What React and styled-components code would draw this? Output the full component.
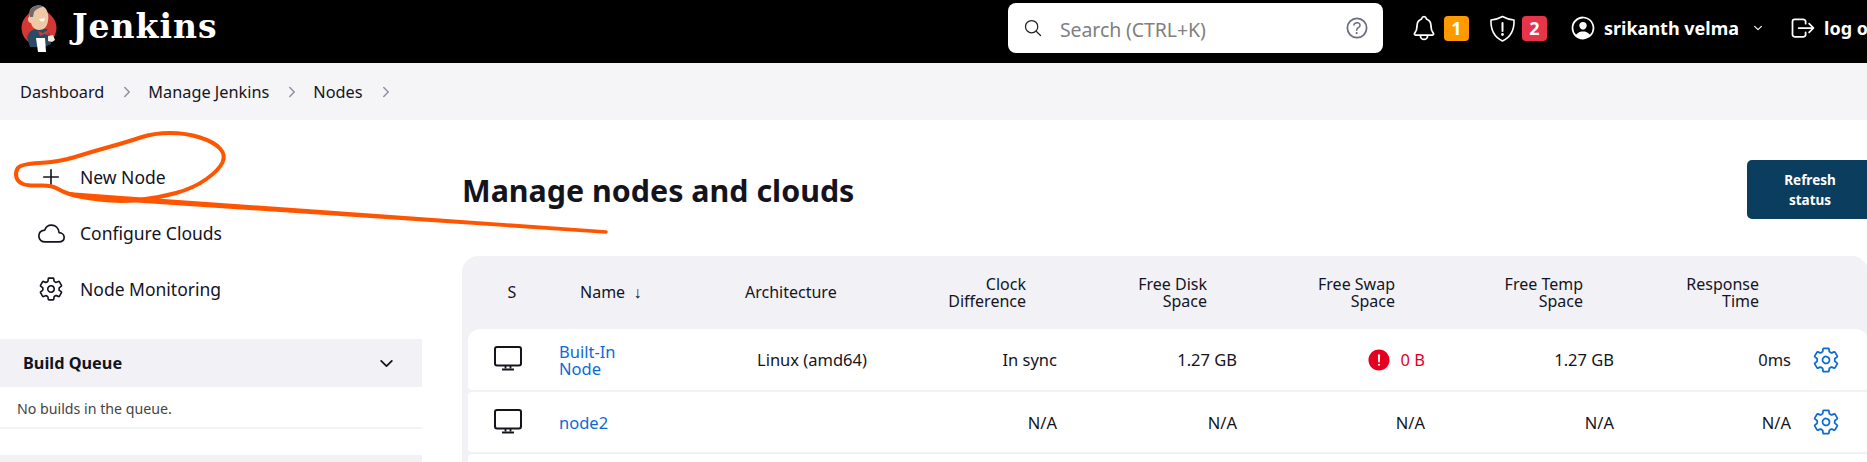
import React from "react";
import styled, { createGlobalStyle } from "styled-components";
import {
  IoSearchOutline, IoHelpCircleOutline, IoNotificationsOutline, IoPersonCircleOutline,
  IoChevronDown, IoChevronForward, IoLogOutOutline, IoAddOutline, IoCloudOutline,
  IoSettingsOutline, IoAlertCircle,
} from "react-icons/io5";

const Global = createGlobalStyle`
  html, body { margin: 0; padding: 0; background: #fff; overflow: hidden; }
  * { box-sizing: border-box; }
`;

const Page = styled.div`
  position: relative; width: 1867px; height: 462px; overflow: hidden;
  font-family: "Noto Sans", "Open Sans", sans-serif; color: #14141f; font-size: 16px;
`;
const TopBar = styled.header`
  height: 63px; width: 1900px; background: #000; color: #fff; display: flex; align-items: center;
`;
const Brand = styled.div`
  display: flex; align-items: center; width: 1008px; padding-left: 21px; flex: none; margin-top: -7px;
`;
const BrandName = styled.span`
  font-family: "DejaVu Serif", serif; font-weight: 700; font-size: 33px; margin-left: 15px; letter-spacing: 1px; margin-top: -4px;
`;
const SearchBox = styled.div`
  width: 375px; height: 50px; margin-top: -7px; background: #fff; border-radius: 8px; flex: none; display: flex; align-items: center;
  padding: 0 12px 0 15px; color: #222;
`;
const SearchText = styled.span`
  flex: 1; margin-left: 17px; color: #808080; font-size: 19.5px; letter-spacing: -.1px; padding-top: 2px;
`;
const NavCluster = styled.div`
  display: flex; align-items: center; margin-left: 27px; margin-top: -7px;
`;
const Badge = styled.span`
  width: 25px; height: 25px; border-radius: 4px; background: ${p => p.$bg}; color: #fff; font-weight: 700; font-size: 18px;
  display: flex; align-items: center; justify-content: center; margin: 0 ${p => p.$after}px 0 6px;
`;
const UserName = styled.span`
  font-weight: 700; font-size: 18px; margin: 0 13px 0 7px; white-space: nowrap;
`;
const LogOut = styled.span`
  font-weight: 700; font-size: 18px; margin-left: 7px; white-space: nowrap;
`;
const NavSpacer = styled.span`
  width: 25px;
`;
const Crumbs = styled.nav`
  height: 57px; background: #f5f5f7; display: flex; align-items: center; padding-left: 20px; color: #8f8fa6;
`;
const Crumb = styled.span`
  color: #14141f; font-size: 16.3px; margin-right: 15px;
`;
const CrumbArrow = styled.span`
  display: inline-flex; margin-right: 13px;
`;
const Body = styled.div`
  display: flex; align-items: flex-start;
`;
const Side = styled.aside`
  width: 422px; flex: none; padding-top: 29px;
`;
const SideItem = styled.div`
  height: 56px; display: flex; align-items: center; padding-left: 38px; font-size: 17.5px;
`;
const SideIcon = styled.span`
  width: 42px; flex: none; display: flex; align-items: center; color: #14141f;
`;
const QueueBar = styled.div`
  height: 48px; margin-top: 22px; background: #f2f2f6; display: flex; align-items: center; justify-content: space-between;
  padding: 0 26px 0 23px; font-weight: 700; font-size: 16.3px;
`;
const QueueBody = styled.div`
  height: 42px; padding: 2px 0 0 17px; display: flex; align-items: center; font-size: 14.2px; color: #444; border-bottom: 2px solid #f3f3f6;
`;
const NextBar = styled.div`
  height: 20px; margin-top: 26px; background: #f2f2f6;
`;
const Main = styled.main`
  margin-left: 40px; width: 1411px; flex: none; padding-top: 40px;
`;
const TitleRow = styled.div`
  height: 59px; margin-bottom: 37px; display: flex; align-items: center; justify-content: space-between;
`;
const Title = styled.h1`
  margin: 3px 0 0; font-size: 30.4px; font-weight: 700; color: #14141f; line-height: 1;
`;
const RefreshButton = styled.button`
  width: 126px; height: 59px; border: 0; border-radius: 5px; background: #0b3d5e; color: #fff; font: 700 13.5px/20px "Noto Sans", sans-serif; padding: 0;
`;
const Table = styled.div`
  width: 1406px; background: #f2f2f6; border-radius: 16px 16px 0 0; padding: 0 0 0 6px; height: 220px;
`;
const headColumns = "100px 183px 120px 161px 181px 188px 188px 176px";
const bodyColumns = "91px 198px 123px 177px 180px 188px 189px 177px 1fr";
const HeadRow = styled.div`
  height: 73px; margin-left: -6px; display: grid; grid-template-columns: ${headColumns}; align-items: center; font-size: 16px; line-height: 17px;
`;
const HeadCell = styled.div`
  padding-left: ${p => p.$pad || 0}px; text-align: ${p => p.$align || "right"};
`;
const Row = styled.div`
  height: ${p => p.$h}px; margin-bottom: 2px; background: #fff; border-radius: ${p => p.$radius}; display: grid; grid-template-columns: ${bodyColumns}; align-items: center; font-size: 16.5px;
`;
const IconCell = styled.div`
  padding-left: 26px; display: flex; margin-top: -2px;
`;
const NameLink = styled.a`
  display: block; color: #0b6bd6; line-height: 17px; font-size: 16.5px; width: 80px;
`;
const Value = styled.div`
  color: ${p => p.$danger ? "#e6001f" : "inherit"}; display: flex; align-items: center; justify-content: ${p => p.$left ? "flex-start" : "flex-end"}; gap: 9px;
`;
const GearCell = styled.div`
  padding-left: 21px; display: flex; color: #0b6bd6;
`;
const Scribble = styled.svg`
  position: absolute; left: 0; top: 0; pointer-events: none;
`;

const smooth = pts => {
  let d = `M${(pts[0][0] + pts[1][0]) / 2} ${(pts[0][1] + pts[1][1]) / 2}`;
  for (let i = 1; i <= pts.length; i++) {
    const a = pts[i % pts.length], b = pts[(i + 1) % pts.length];
    d += ` Q${a[0]} ${a[1]} ${(a[0] + b[0]) / 2} ${(a[1] + b[1]) / 2}`;
  }
  return d;
};
const loop = [[20,164],[59,162],[91,152],[127,142],[154,133],[186,133],[214,142],[226,155],[219,170],[194,188],[158,198],[119,202],[79,197],[63,192],[51,185],[28,186],[18,182],[15,173]];

const JenkinsLogo = () => (
  <svg width="36" height="49" viewBox="0 0 36 49">
    <circle cx="18" cy="24" r="17.5" fill="#d33833" />
    <path d="M6 33c2-6 6-8 12-9l8 1 3 6 1 9-6 3H9z" fill="#2b4a63" />
    <path d="M9 6c2-4 9-6 14-3 4 3 5 9 4 14-1 6-4 9-9 9-4 0-7-3-8-7-3 0-4-5-2-6z" fill="#f0c9a4" />
    <path d="M9 13C7 8 9 3 15 2c3-1 6 0 8 1-4 0-8 2-10 5l-1 5z" fill="#6d6b6d" />
    <path d="M18 15c2 0 5-1 6-1l-1 3c-2 1-4 0-5-2z" fill="#fff" />
    <path d="M17 27l5 2 5-3 1 5-5-1-4 2z" fill="#d33833" />
    <path d="M15 34h9l1 14h-8z" fill="#fff" />
    <path d="M27 32l5-1 2 5-3 2-4-1z" fill="#f3e9dc" />
  </svg>
);
const ShieldIcon = () => (
  <svg width="27" height="27" viewBox="0 0 27 27" fill="none" stroke="#fff" strokeWidth="1.6" strokeLinejoin="round" strokeLinecap="round">
    <path d="M13.5 1.5C17 3.5 20.5 4.6 25 5c.4 10-3 17-11.5 21C5 22 1.6 15 2 5c4.5-.4 8-1.5 11.5-3.5z" />
    <path d="M13.5 8v8" strokeWidth="2" />
    <circle cx="13.5" cy="19.5" r=".6" fill="#fff" />
  </svg>
);
const Desktop = () => (
  <svg width="28" height="25" viewBox="0 0 28 25" fill="none" stroke="#14141f" strokeWidth="2" strokeLinejoin="round">
    <rect x="1" y="1" width="26" height="18.5" rx="2" />
    <path d="M11.5 19.5v3M16.5 19.5v3" strokeWidth="1.8" />
    <path d="M8 23.5h12" strokeWidth="2" />
  </svg>
);
const Gear = () => <IoSettingsOutline size={28} />;
const Monitor = ({ radius, h, children, name }) => (
  <Row $h={h} $radius={radius}>
    <IconCell><Desktop /></IconCell>
    <NameLink>{name}</NameLink>
    {children}
    <GearCell><Gear /></GearCell>
  </Row>
);

export default function App() {
  return (
    <Page>
      <Global />
      <TopBar>
        <Brand>
          <JenkinsLogo />
          <BrandName>Jenkins</BrandName>
        </Brand>
        <SearchBox>
          <IoSearchOutline size={20} />
          <SearchText>Search (CTRL+K)</SearchText>
          <IoHelpCircleOutline size={28} color="#6b6b85" />
        </SearchBox>
        <NavCluster>
          <IoNotificationsOutline size={28} />
          <Badge $bg="#fe9a00" $after={20}>1</Badge>
          <ShieldIcon />
          <Badge $bg="#e6354a" $after={22}>2</Badge>
          <IoPersonCircleOutline size={28} />
          <UserName>srikanth velma</UserName>
          <IoChevronDown size={12} />
          <NavSpacer />
          <IoLogOutOutline size={28} />
          <LogOut>log out</LogOut>
        </NavCluster>
      </TopBar>
      <Crumbs>
        <Crumb>Dashboard</Crumb><CrumbArrow><IoChevronForward size={16} /></CrumbArrow>
        <Crumb>Manage Jenkins</Crumb><CrumbArrow><IoChevronForward size={16} /></CrumbArrow>
        <Crumb>Nodes</Crumb><CrumbArrow><IoChevronForward size={16} /></CrumbArrow>
      </Crumbs>
      <Body>
        <Side>
          <SideItem><SideIcon><IoAddOutline size={26} /></SideIcon>New Node</SideItem>
          <SideItem><SideIcon><IoCloudOutline size={27} /></SideIcon>Configure Clouds</SideItem>
          <SideItem><SideIcon><IoSettingsOutline size={26} /></SideIcon>Node Monitoring</SideItem>
          <QueueBar>Build Queue<IoChevronDown size={19} /></QueueBar>
          <QueueBody>No builds in the queue.</QueueBody>
          <NextBar />
        </Side>
        <Main>
          <TitleRow>
            <Title>Manage nodes and clouds</Title>
            <RefreshButton>Refresh<br />status</RefreshButton>
          </TitleRow>
          <Table>
            <HeadRow>
              <HeadCell $align="center">S</HeadCell>
              <HeadCell $align="left" $pad={18}>Name&nbsp;&nbsp;↓</HeadCell>
              <HeadCell $align="left">Architecture</HeadCell>
              <HeadCell>Clock<br />Difference</HeadCell>
              <HeadCell>Free Disk<br />Space</HeadCell>
              <HeadCell>Free Swap<br />Space</HeadCell>
              <HeadCell>Free Temp<br />Space</HeadCell>
              <HeadCell>Response<br />Time</HeadCell>
            </HeadRow>
            <Monitor name="Built-In Node" h={61} radius="12px 12px 4px 4px">
              <Value $left>Linux (amd64)</Value>
              <Value>In sync</Value>
              <Value>1.27 GB</Value>
              <Value $danger><IoAlertCircle size={26} />0 B</Value>
              <Value>1.27 GB</Value>
              <Value>0ms</Value>
            </Monitor>
            <Monitor name="node2" h={60} radius="4px">
              <Value $left />
              <Value>N/A</Value>
              <Value>N/A</Value>
              <Value>N/A</Value>
              <Value>N/A</Value>
              <Value>N/A</Value>
            </Monitor>
            <Row $h={40} $radius="4px" />
          </Table>
        </Main>
      </Body>
      <Scribble width="1867" height="462" fill="none" stroke="#ff5500" strokeLinecap="round" strokeLinejoin="round">
        <path d={smooth(loop)} strokeWidth="4" />
        <path d="M71 194 Q95 200 125 200 L606 232 L125 198 Z" strokeWidth="3.5" fill="#ff5500" />
      </Scribble>
    </Page>
  );
}
